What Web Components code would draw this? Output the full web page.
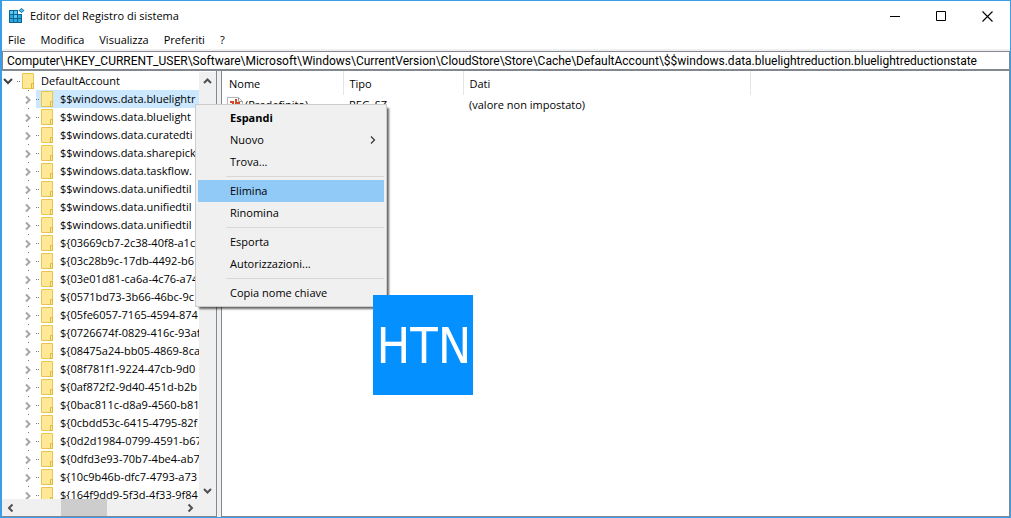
<!DOCTYPE html>
<html lang="it">
<head>
<meta charset="utf-8">
<title>Editor del Registro di sistema</title>
<style>
  html, body { margin: 0; height: 100%; }
  body { font: 11px/18px "Open Sans", "Noto Sans", sans-serif; color: #000; background: #fff; overflow: hidden; }
</style>
</head>
<body>
<reg-window></reg-window>

<script>
const define = (name, html, setup) => {
  const template = document.createElement('template');
  template.innerHTML = html;
  customElements.define(name, class extends HTMLElement {
    connectedCallback() {
      if (this.shadowRoot) return;
      this.attachShadow({ mode: 'open' }).append(template.content.cloneNode(true));
      if (setup) setup(this, this.shadowRoot);
    }
  });
};

define('reg-titlebar', `
<style>
  :host { display: flex; align-items: center; height: 30px; padding-left: 7px; }
  .logo { flex: none; margin-right: 5px; }
  h1 { flex: 1; margin: 0; font: inherit; white-space: nowrap; }
  button { width: 46px; height: 30px; padding: 0; border: 0; background: none; display: grid; place-items: center; }
</style>
<svg class="logo" width="16" height="16" viewBox="0 0 16 16" aria-hidden="true">
  <path d="M0 2h9v4h4v9H0z" fill="#0b6592"/>
  <path d="M1 3h3v3H1zM5 3h3v3H5zM1 7h3v3H1zM5 7h3v3H5zM9 7h3v3H9zM1 11h3v3H1zM5 11h3v3H5zM9 11h3v3H9z" fill="#2fa9dc"/>
  <path d="M1 3h3v3H1zM5 7h3v3H5zM5 3h3v3H5z" fill="#5cc8f2"/>
  <path d="M12.500 0l3 2.500-3 2.500-3-2.500z" fill="#16709c"/>
  <path d="M12.500 1l1.800 1.500-1.800 1.500-1.800-1.500z" fill="#58c9f2"/>
</svg>
<h1>Editor del Registro di sistema</h1>
<button aria-label="Riduci a icona"><svg width="10" height="11"><path d="M0 5.500h10" stroke="#000"/></svg></button>
<button aria-label="Ingrandisci"><svg width="10" height="10"><path d="M.5 .5h9v9h-9z" fill="none" stroke="#000"/></svg></button>
<button aria-label="Chiudi"><svg width="11" height="11"><path d="M.5 .5l10 10M10.500 .5l-10 10" stroke="#000" stroke-width="1.100"/></svg></button>
`);

define('reg-menubar', `
<style>
  :host { display: flex; align-items: flex-end; height: 18px; gap: 15px; padding: 0 6px; }
  button { font: inherit; color: inherit; border: 0; padding: 0; background: none; }
</style>
<button>File</button><button>Modifica</button><button>Visualizza</button><button>Preferiti</button><button>?</button>
`);

define('reg-address', `
<style>
  :host { display: block; border-top: 2px solid #f0f0f0; }
  input { display: block; box-sizing: border-box; width: 100%; height: 20px; margin: 0; padding: 0 4px;
    border: 1px solid #828790; border-bottom-width: 2px; border-radius: 0; font: 12px/16px Roboto, sans-serif; color: #000; background: #fff; outline: 0; }
</style>
<input aria-label="Percorso della chiave" value="Computer\\HKEY_CURRENT_USER\\Software\\Microsoft\\Windows\\CurrentVersion\\CloudStore\\Store\\Cache\\DefaultAccount\\$$windows.data.bluelightreduction.bluelightreductionstate">
`);

define('reg-key', `
<style>
  :host { display: grid; grid-template-columns: 15px 5px 12px 1fr; align-items: center; height: 18px; padding-left: 19px; white-space: nowrap; }
  :host([open]) { padding-left: 0; }
  button { padding: 0; border: 0; background: none; width: 15px; height: 18px; }
  svg { display: block; }
  .arrow { fill: none; stroke: #a6a6a6; stroke-width: 2; }
  .down { display: none; stroke: #404040; }
  :host([open]) .down { display: block; }
  :host([open]) .right { display: none; }
  .label { overflow: hidden; margin-left: 1px; padding-left: 6px; height: 18px; }
  :host([selected]) .label, :host([selected]) .icon, :host([selected]) .dots { background: #cce8ff; }
  :host([selected]) .label { margin-left: 0; padding-left: 7px; }
</style>
<button aria-label="Espandi o comprimi">
  <svg class="right" width="15" height="18"><path d="M7 0h1v1H7z" fill="#777"/><path class="arrow" d="M5 6.500l3.500 3.500L5 13.500"/></svg>
  <svg class="down arrow" width="15" height="18"><path d="M2 7l4 4 4-4"/></svg>
</button>
<svg class="dots" width="5" height="18"><path d="M0 9h1v1H0zM2 9h1v1H2z" fill="#777"/></svg>
<svg class="icon" width="12" height="18" aria-hidden="true">
  <path d="M.5 1.500h11v15H.5z" fill="#ffe896" stroke="#e9c64c"/>
  <path d="M9.500 11.500h2v5h-2z" fill="#ffe896" stroke="#e0b83d"/>
</svg>
<span class="label"><slot></slot></span>
`);

define('reg-scrollbar', `
<style>
  :host { display: flex; flex-direction: column; justify-content: space-between; width: 17px; background: #f0f0f0; }
  :host([horizontal]) { flex-direction: row; width: auto; height: 17px; }
  button { padding: 0; border: 0; background: none; width: 17px; height: 17px; display: grid; place-items: center; flex: none; }
  svg { fill: none; stroke: #505050; stroke-width: 2; }
  .back { transform: rotate(180deg); }
  :host([horizontal]) svg { transform: rotate(-90deg); }
  :host([horizontal]) .back { transform: rotate(90deg); }
  .track { flex: 1; display: none; }
  :host([horizontal]) .track { display: grid; grid-template-columns: 26% 28% 1fr; }
  .thumb { grid-column: 2; background: #cdcdcd; }
</style>
<button aria-label="Scorri indietro"><svg class="back" width="9" height="6"><path d="M1 1l3.500 3.500L8 1"/></svg></button>
<div class="track"><div class="thumb"></div></div>
<button aria-label="Scorri avanti"><svg width="9" height="6"><path d="M1 1l3.500 3.500L8 1"/></svg></button>
`);

define('reg-tree', `
<style>
  :host { display: grid; grid-template: minmax(0, 1fr) 17px / minmax(0, 1fr) 17px; min-height: 0; padding-top: 1px;
    box-sizing: border-box; border-right: 1px solid #828790; border-bottom: 1px solid #828790; }
  .keys { overflow: hidden; }
  .corner { background: #f0f0f0; }
</style>
<div class="keys"></div>
<reg-scrollbar></reg-scrollbar>
<reg-scrollbar horizontal></reg-scrollbar>
<div class="corner"></div>
`, (host, root) => {
  const names = [
    '$$windows.data.bluelightr', '$$windows.data.bluelight', '$$windows.data.curatedti',
    '$$windows.data.sharepick', '$$windows.data.taskflow.', '$$windows.data.unifiedtil', '$$windows.data.unifiedtil',
    '$$windows.data.unifiedtil', '${03669cb7-2c38-40f8-a1c', '${03c28b9c-17db-4492-b6', '${03e01d81-ca6a-4c76-a74',
    '${0571bd73-3b66-46bc-9c', '${05fe6057-7165-4594-874', '${0726674f-0829-416c-93af', '${08475a24-bb05-4869-8ca',
    '${08f781f1-9224-47cb-9d0', '${0af872f2-9d40-451d-b2b', '${0bac811c-d8a9-4560-b81', '${0cbdd53c-6415-4795-82f',
    '${0d2d1984-0799-4591-b67', '${0dfd3e93-70b7-4be4-ab7', '${10c9b46b-dfc7-4793-a73', '${164f9dd9-5f3d-4f33-9f84'
  ];
  const add = (text, flag) => {
    const key = document.createElement('reg-key');
    key.textContent = text;
    if (flag) key.setAttribute(flag, '');
    root.querySelector('.keys').append(key);
  };
  add('DefaultAccount', 'open');
  names.forEach((name, i) => add(name, i === 0 ? 'selected' : ''));
});

define('reg-values', `
<style>
  :host { display: block; overflow: hidden; min-width: 0; border: 1px solid #828790; border-top: 0; }
  table { border-collapse: collapse; table-layout: fixed; width: 529px; }
  th, td { font-weight: 400; text-align: left; padding: 0; white-space: nowrap; }
  th { height: 24px; box-sizing: border-box; border-right: 1px solid #e5e5e5; padding: 1px 0 0 6px; }
  th:first-child { padding-left: 7px; }
  td { height: 20px; padding-left: 6px; }
  td:first-child { padding-left: 5px; }
  .name { display: flex; align-items: center; gap: 2px; }
</style>
<table>
  <colgroup><col style="width:121px"><col style="width:120px"><col></colgroup>
  <thead><tr><th>Nome</th><th>Tipo</th><th>Dati</th></tr></thead>
  <tbody><tr>
    <td><span class="name">
      <svg width="16" height="16" viewBox="0 0 16 16" role="img" aria-label="Stringa">
        <path d="M.5 .5h11l4 4v11H.5z" fill="#fff" stroke="#b5b5b5"/><path d="M11.500 .5v4h4" fill="none" stroke="#999"/>
        <g fill="none" stroke="#d5492a" stroke-width="2"><path d="M3 5h3v6M6 8H3v3h3M9 2v9h3V6H9"/></g>
      </svg>(Predefinito)</span></td>
    <td>REG_SZ</td><td>(valore non impostato)</td>
  </tr></tbody>
</table>
`);

define('reg-context', `
<style>
  :host { display: block; box-sizing: border-box; width: 192px; padding: 2px; background: #f0f0f0; border: 1px solid #ccc;
    box-shadow: 3px 3px 2px -1px rgba(0,0,0,.6); }
  button { display: flex; align-items: center; justify-content: space-between; width: 100%; height: 22px; padding: 0 8px 0 32px;
    border: 0; background: none; font: inherit; color: inherit; text-align: left; }
  .default { font-weight: 700; }
  .hot { background: #91c9f7; }
  hr { height: 1px; margin: 3px 0 3px 28px; border: 0; background: #d7d7d7; }
</style>
<button class="default">Espandi</button>
<button>Nuovo<svg width="6" height="10"><path d="M1 1.500l3.500 3.500L1 8.500" fill="none" stroke="#333" stroke-width="1.200"/></svg></button>
<button>Trova...</button>
<hr>
<button class="hot">Elimina</button>
<button>Rinomina</button>
<hr>
<button>Esporta</button>
<button>Autorizzazioni...</button>
<hr>
<button>Copia nome chiave</button>
`);

define('reg-badge', `
<style>
  :host { display: grid; place-items: center; box-sizing: border-box; width: 100px; height: 100px; padding: 2px 0 0 2px;
    background: #0590ff; color: #fff; font: 50px/1 "DejaVu Sans Condensed", "DejaVu Sans", sans-serif; }
</style>
<span><slot></slot></span>
`);

define('reg-window', `
<style>
  :host { display: flex; flex-direction: column; box-sizing: border-box; height: 100vh; position: relative; background: #fff;
    border: 1px solid #3a9de8; border-left-width: 2px; }
  main { flex: 1; min-height: 0; display: grid; grid-template-columns: 215px minmax(0, 1fr); gap: 4px; background: #f0f0f0; }
  reg-tree, reg-values { background: #fff; }
  reg-context { position: absolute; left: 193px; top: 103px; }
  reg-badge { position: absolute; left: 371px; top: 294px; }
</style>
<reg-titlebar></reg-titlebar>
<reg-menubar></reg-menubar>
<reg-address></reg-address>
<main><reg-tree></reg-tree><reg-values></reg-values></main>
<reg-context></reg-context>
<reg-badge>HTN</reg-badge>
`);
</script>
</body>
</html>
